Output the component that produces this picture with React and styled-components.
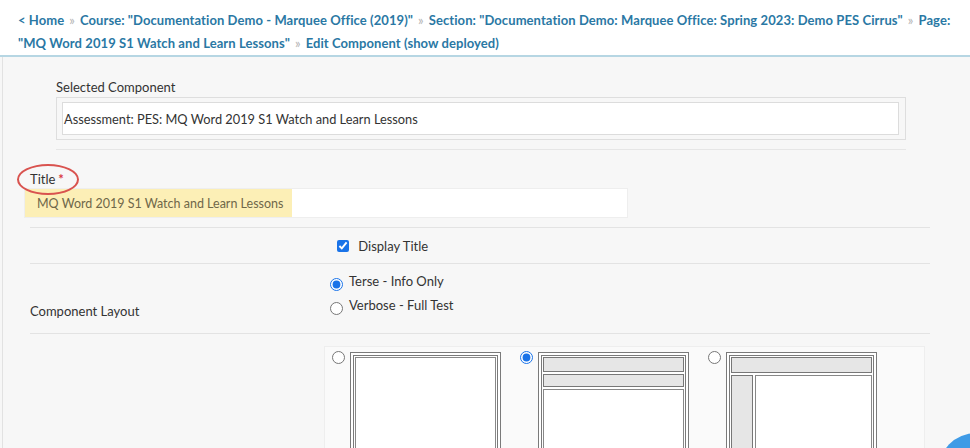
import styled, { createGlobalStyle } from 'styled-components';

const GlobalStyle = createGlobalStyle`
	html, body {
		margin: 0;
		padding: 0;
		background: #f7f7f7;
		font-family: Lato, "Open Sans", Arial, sans-serif;
		overflow: hidden;
	}
	* {
		box-sizing: border-box;
	}
`;

const Page = styled.div`
	width: 970px;
	height: 448px;
	display: flex;
	flex-direction: column;
`;

const Header = styled.header`
	background: #ffffff;
	height: 59px;
	padding: 9px 14px 0 18px;
	border-bottom: 2px solid #b6d6e3;
	font-size: 13px;
	font-weight: 700;
	line-height: 23px;
	letter-spacing: 0.08px;
	color: #2a78a4;
`;

const Crumb = styled.a`
	color: inherit;
	text-decoration: none;
`;

const Sep = styled.span`
	color: #b4b4b4;
	font-weight: 400;
	margin: 0 5px;
`;

const Main = styled.main`
	flex: 1;
	margin-left: 2px;
	border-left: 1px solid #e2e2e2;
	background: #f7f7f7;
	padding-top: 21px;
	color: #333;
	font-size: 13px;
`;

const SelectedBlock = styled.div`
	margin-left: 53px;
	width: 850px;
`;

const Label = styled.div`
	line-height: 18px;
	margin-bottom: ${p => p.$gap || '1px'};
	position: relative;
	display: inline-block;
`;

const OuterBox = styled.div`
	border: 1px solid #dedede;
	padding: 4px 6px 4px 5px;
	height: 43px;
`;

const InnerBox = styled.div`
	border: 1px solid #dcdcdc;
	background: #fff;
	height: 100%;
	display: flex;
	align-items: center;
	padding-left: 1px;
	font-size: 12.8px;
`;

const Divider = styled.hr`
	margin: 9px 0 0;
	border: 0;
	border-top: 1px solid #e6e6e6;
`;

const TitleField = styled.div`
	margin: 20px 0 0 21px;
`;

const TitleLabel = styled(Label)`
	margin-left: 6px;
	&::before {
		content: '';
		position: absolute;
		left: -13px;
		top: -6px;
		width: 58px;
		height: 27px;
		border: 2px solid #d9534f;
		border-radius: 50%;
	}
`;

const Required = styled.span`
	color: #d9363e;
	font-weight: 700;
	margin-left: 3px;
`;

const TextInput = styled.div`
	width: 604px;
	height: 30px;
	background: #fff;
	border: 1px solid #eeeeee;
	display: flex;
	align-items: stretch;
`;

const Highlight = styled.span`
	background: #fcefb6;
	color: #6f6749;
	font-size: 12.5px;
	display: flex;
	align-items: center;
	padding: 0 9px 0 12px;
`;

const Form = styled.div`
	margin: 9px 0 0 27px;
	width: 900px;
`;

const Row = styled.div`
	display: grid;
	grid-template-columns: 300px 1fr;
	border-top: 1px solid #e3e3e3;
	padding: ${p => p.$pad || '0'};
`;

const RowLabel = styled.div`
	align-self: ${p => p.$align || 'center'};
	padding-bottom: ${p => p.$bottom || '0'};
`;

const Controls = styled.div`
	display: flex;
	flex-direction: column;
	padding-left: ${p => p.$indent || '0'};
`;

const Option = styled.label`
	display: flex;
	align-items: center;
	gap: 6px;
	height: ${p => p.$h || '24px'};
	color: #333;
`;

const OptionText = styled.span`
	position: relative;
	top: ${p => p.$shift || '0'};
`;

const Check = styled.input`
	margin: 0;
	width: 12px;
	height: 12px;
	accent-color: #1a73e8;
`;

const Radio = styled.input`
	margin: 0;
	width: 13px;
	height: 13px;
	accent-color: #1a73e8;
`;

const Picker = styled.div`
	background: #fafafa;
	border: 1px solid #eeeeee;
	border-bottom: 0;
	width: 601px;
	margin-left: -6px;
	padding: 4px 0 0 7px;
	display: flex;
	gap: 19px;
	height: 120px;
`;

const Choice = styled.div`
	display: flex;
	align-items: flex-start;
	gap: 5px;
`;

const Sketch = styled.div`
	width: 151px;
	height: 130px;
	margin-top: 1px;
	border: 4px double #7a7a7a;
	background: #fff;
	display: grid;
	grid-template-columns: ${p => (p.$sidebar ? '22px 1fr' : '1fr')};
	grid-template-rows: ${p => p.$rows || '1fr'};
	gap: 2px;
	padding: 1px;
`;

const Bar = styled.div`
	background: #e6e6e6;
	border: 1px solid #777;
	grid-column: ${p => p.$span || 'auto'};
`;

const Pane = styled.div`
	background: #fff;
	border: 1px solid #888;
`;

const FloatButton = styled.div`
	position: fixed;
	left: 938px;
	top: 433px;
	width: 76px;
	height: 76px;
	border-radius: 50%;
	background: #3f9be6;
`;

export default function App() {
	const Arrow = () => <Sep>»</Sep>;
	return (
		<Page>
			<GlobalStyle />
			<Header>
				<Crumb>&lt; Home</Crumb>
				<Arrow />
				<Crumb>Course: "Documentation Demo - Marquee Office (2019)"</Crumb>
				<Arrow />
				<Crumb>Section: "Documentation Demo: Marquee Office: Spring 2023: Demo PES Cirrus"</Crumb>
				<Arrow />
				<Crumb>Page: "MQ Word 2019 S1 Watch and Learn Lessons"</Crumb>
				<Arrow />
				<Crumb>Edit Component (show deployed)</Crumb>
			</Header>
			<Main>
				<SelectedBlock>
					<Label>Selected Component</Label>
					<OuterBox>
						<InnerBox>Assessment: PES: MQ Word 2019 S1 Watch and Learn Lessons</InnerBox>
					</OuterBox>
					<Divider />
				</SelectedBlock>

				<TitleField>
					<TitleLabel $gap="0">
						Title<Required>*</Required>
					</TitleLabel>
					<TextInput>
						<Highlight>MQ Word 2019 S1 Watch and Learn Lessons</Highlight>
					</TextInput>
				</TitleField>

				<Form>
					<Row $pad="10px 0 10px">
						<div />
						<Controls $indent="7px">
							<Option $h="15px">
								<Check type="checkbox" defaultChecked />
								<OptionText>&nbsp;Display Title</OptionText>
							</Option>
						</Controls>
					</Row>
					<Row $pad="8px 0 13px">
						<RowLabel $align="end" $bottom="1px">Component Layout</RowLabel>
						<Controls>
							<Option>
								<Radio type="radio" name="layout" defaultChecked />
								<OptionText $shift="-3px">Terse - Info Only</OptionText>
							</Option>
							<Option>
								<Radio type="radio" name="layout" />
								<OptionText $shift="-3px">Verbose - Full Test</OptionText>
							</Option>
						</Controls>
					</Row>
					<Row $pad="12px 0 0">
						<div />
						<Picker>
							<Choice>
								<Radio type="radio" name="frame" />
								<Sketch>
									<Pane />
								</Sketch>
							</Choice>
							<Choice>
								<Radio type="radio" name="frame" defaultChecked />
								<Sketch $rows="15px 13px 1fr">
									<Bar />
									<Bar />
									<Pane />
								</Sketch>
							</Choice>
							<Choice>
								<Radio type="radio" name="frame" />
								<Sketch $sidebar $rows="16px 1fr">
									<Bar $span="1 / span 2" />
									<Bar />
									<Pane />
								</Sketch>
							</Choice>
						</Picker>
					</Row>
				</Form>
			</Main>
			<FloatButton />
		</Page>
	);
}
